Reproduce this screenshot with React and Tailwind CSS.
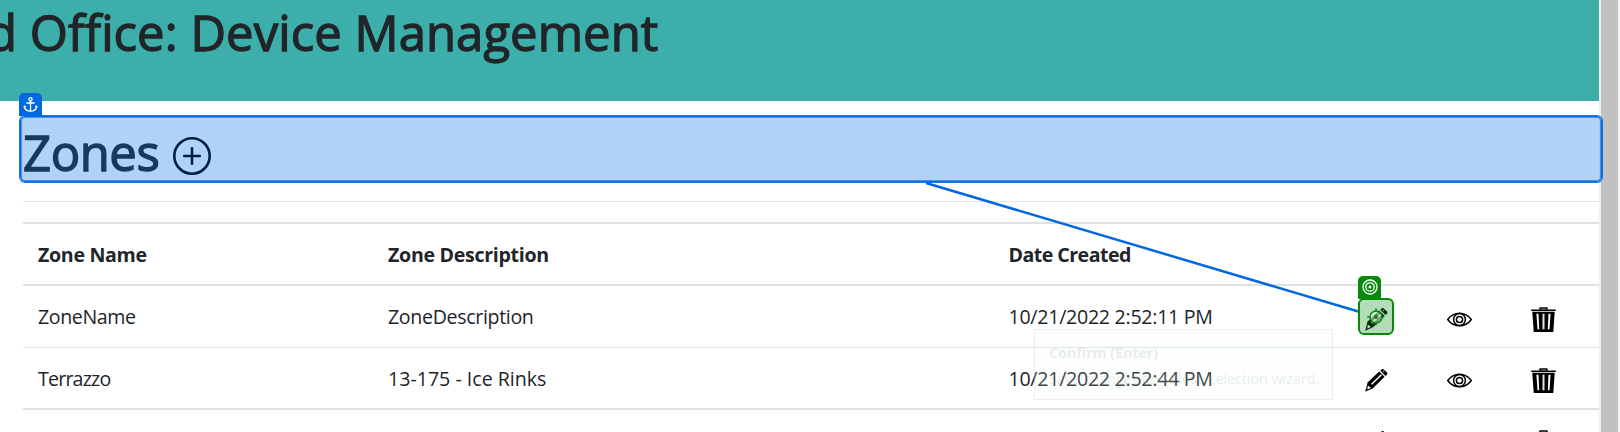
function PlusCircle() {
  return (
    <svg className="size-[38px] shrink-0" viewBox="0 0 38 38" fill="none" stroke="#000" strokeWidth="2.6" strokeLinecap="round">
      <circle cx="19" cy="19" r="17.7" />
      <path d="M19 11.2v15.6M11.2 19h15.6" />
    </svg>
  );
}

function Pencil() {
  return (
    <svg className="h-[25px] w-[25px]" viewBox="0 0 25 25">
      <path d="M3.6 14.6 15.2 3.4l5.4 5.4L9 20.2 1.2 23.8z" fill="#000" />
      <path d="M6 14.9 15.6 6M8.3 18 18.6 8" stroke="#000" strokeWidth="1" />
      <path d="M7.6 16.2 17.4 6.8" stroke="#fff" strokeWidth="1.5" />
      <path d="M3.9 17.6 6.9 20 3.3 21.6z" fill="#fff" />
      <path d="m16.3 2.7 1.3-1.3c.6-.6 1.4-.6 2 0l3.4 3.2c.6.6.6 1.4 0 2l-1.4 1.3z" fill="#000" />
      <path d="m18.3 3.6 1.2-1 .9.9-1 1.1z" fill="#999" />
    </svg>
  );
}

function Eye() {
  return (
    <svg className="h-[25px] w-[25px]" viewBox="0 0 25 25" fill="none" stroke="#000" strokeWidth="1.5">
      <path d="M.7 12.5C4 8 8.2 6.2 12.5 6.2S21 8 24.3 12.5C21 17 16.8 18.8 12.5 18.8S4 17 .7 12.5z" />
      <circle cx="12.5" cy="12.5" r="5.9" />
      <circle cx="12.5" cy="12.5" r="3.1" />
    </svg>
  );
}

function Trash() {
  return (
    <svg className="h-[25px] w-[25px]" viewBox="0 0 25 25">
      <path d="M8.2 2.6V1.6C8.2.7 8.8.2 9.6.2h5.8c.8 0 1.4.5 1.4 1.4v1z" fill="#000" />
      <path d="M10 1.5h5v1h-5z" fill="#888" />
      <path d="M.2 2.5h24.6v1.5H.2z" fill="#000" />
      <path d="M1.3 4.8h22.4L22.3 25H2.7z" fill="#000" />
      <path d="m5.4 6.8 2.1-.1.7 15.6H6.5zM19.6 6.8l-2.1-.1-.7 15.6h1.7z" fill="#fff" />
      <path d="M11.5 6.7h2v15.6h-2z" fill="#e4e4e4" />
    </svg>
  );
}

function Anchor() {
  return (
    <svg className="size-[15px]" viewBox="0 0 15 15" fill="none" stroke="#fff" strokeWidth="1.3">
      <circle cx="7.5" cy="2.3" r="1.6" />
      <path d="M7.5 4v10.3M3.3 6h8.4" />
      <path d="M1.4 8.9c.2 3.3 2.7 5.3 6.1 5.3s5.9-2 6.1-5.3" />
      <path d="M.7 10.3 1.5 8.8l1.5 1M14.3 10.3l-.8-1.5-1.5 1" strokeWidth="1" />
    </svg>
  );
}

function Target() {
  return (
    <svg className="size-[16px]" viewBox="0 0 16 16" fill="none" stroke="#fff" strokeWidth="1.3">
      <circle cx="8" cy="8" r="7" />
      <circle cx="8" cy="8" r="4.2" />
      <circle cx="8" cy="8" r="1.5" fill="#fff" stroke="none" />
    </svg>
  );
}

function Crosshair() {
  return (
    <svg className="size-[20px]" viewBox="0 0 20 20" fill="none" stroke="#078a0c" strokeWidth="1.5">
      <circle cx="10" cy="10" r="6" fill="#fff" fillOpacity=".5" />
      <path d="M10 1.2v3M10 15.8v2.4M1.2 10h3M15.8 10h2.4" />
      <circle cx="10" cy="10" r="2" fill="#078a0c" stroke="none" />
    </svg>
  );
}

const cols = "grid grid-cols-[350px_621px_334px_83px_83px_105px] items-center";

function Row({ name, nameClass, description, descriptionClass, date, className, textClass = "", iconClass }) {
  return (
    <div className={`${cols} ${className}`}>
      <div className={`pl-[15px] ${textClass} ${nameClass}`}>{name}</div>
      <div className={`pl-[15px] ${textClass} ${descriptionClass}`}>{description}</div>
      <div className={`pl-[14.5px] tracking-[-0.27px] ${textClass}`}>{date}</div>
      <div className={`pl-[36px] ${iconClass}`}><Pencil /></div>
      <div className={`pl-[36px] ${iconClass}`}><Eye /></div>
      <div className={`pl-[37px] ${iconClass}`}><Trash /></div>
    </div>
  );
}

export default function App() {
  return (
    <div className="relative flex h-[432px] w-[1620px] overflow-hidden bg-white font-['Open_Sans','Noto_Sans',sans-serif] text-[19.6px] text-[#212529]">
      <main className="h-full w-[1599px] shrink-0 overflow-hidden">
        <header className="h-[101px] bg-[#3cafaa]">
          <h1 className="-ml-[13px] whitespace-nowrap text-[49px] leading-[64px] font-medium tracking-[0.07px] [-webkit-text-stroke:1.3px_#212529]">
            d Office: Device Management
          </h1>
        </header>
        <section className="ml-[23px] pt-[21px]">
          <div className="flex h-[60px] items-center">
            <h1 className="w-[150px] text-[49px] leading-[60px] font-medium tracking-[-0.4px] [-webkit-text-stroke:1.3px_#212529]">Zones</h1>
            <div className="pt-[8px]"><PlusCircle /></div>
          </div>
          <div className="mt-[19px] h-px bg-[#e3e4e4]" />
          <div className="mt-[20px] border-t-2 border-[#dee2e6]">
            <div className={`${cols} h-[62px] border-b-2 border-[#dee2e6] pt-[2px] font-bold`}>
              <div className="pl-[15px] tracking-[-0.32px]">Zone Name</div>
              <div className="pl-[15px] tracking-[-0.3px]">Zone Description</div>
              <div className="pl-[14.5px] tracking-[-0.54px]">Date Created</div>
            </div>
            <Row className="h-[62px] border-b border-[#dee2e6]" iconClass="pt-[6px]" name="ZoneName" nameClass="tracking-[-0.4px]" description="ZoneDescription" descriptionClass="tracking-[-0.34px]" date="10/21/2022 2:52:11 PM" />
            <Row className="h-[62px] border-b-2 border-[#dee2e6]" textClass="pt-[2px]" iconClass="pt-[5px]" name="Terrazzo" nameClass="tracking-[-0.8px]" description="13-175 - Ice Rinks" descriptionClass="" date="10/21/2022 2:52:44 PM" />
            <Row className="h-[60px]" iconClass="pt-[5px]" />
          </div>
        </section>
      </main>
      <div className="w-[21px] border-r-2 border-l-2 border-[#f1f1f1] bg-[#c1c1c1]" />

      <div className="absolute top-[329px] left-[1034px] flex h-[71px] w-[299px] flex-col justify-between border border-[#777]/12 bg-[#e8fff8]/15 pt-[12px] pr-[13px] pb-[9px] pl-[14px] text-[14.5px] leading-[22px] whitespace-nowrap text-[#999]/20">
        <div className="font-bold tracking-[-0.15px]">Confirm (Enter)</div>
        <div className="tracking-[-0.12px]">Save changes and close selection wizard.</div>
      </div>

      <svg className="absolute inset-0 h-[432px] w-[1620px]" viewBox="0 0 1620 432">
        <path d="M926 183 1360 312" stroke="#0168e2" strokeWidth="2.5" />
      </svg>

      <div className="absolute top-[92.5px] left-[19px] flex h-[23.5px] w-[23px] items-center justify-center rounded-t-[5px] bg-[#0168e2]">
        <Anchor />
      </div>
      <div className="absolute top-[116px] left-[20px] h-[66px] w-[1581.5px] rounded-[5px] border border-[#0168e2] bg-[#0168e2]/30 shadow-[0_0_0_1px_rgba(1,104,226,0.9),inset_0_0_0_1px_rgba(1,104,226,0.6)]" />

      <div className="absolute top-[275.5px] left-[1358px] flex h-[23.5px] w-[23px] items-center justify-center rounded-t-[5px] bg-[#078a0c]">
        <Target />
      </div>
      <div className="absolute top-[298px] left-[1358px] h-[37px] w-[36px] rounded-[6px] border-2 border-[#078a0c] bg-[#078a0c]/30 pt-[7px] pl-[6px]">
        <Crosshair />
      </div>
    </div>
  );
}
